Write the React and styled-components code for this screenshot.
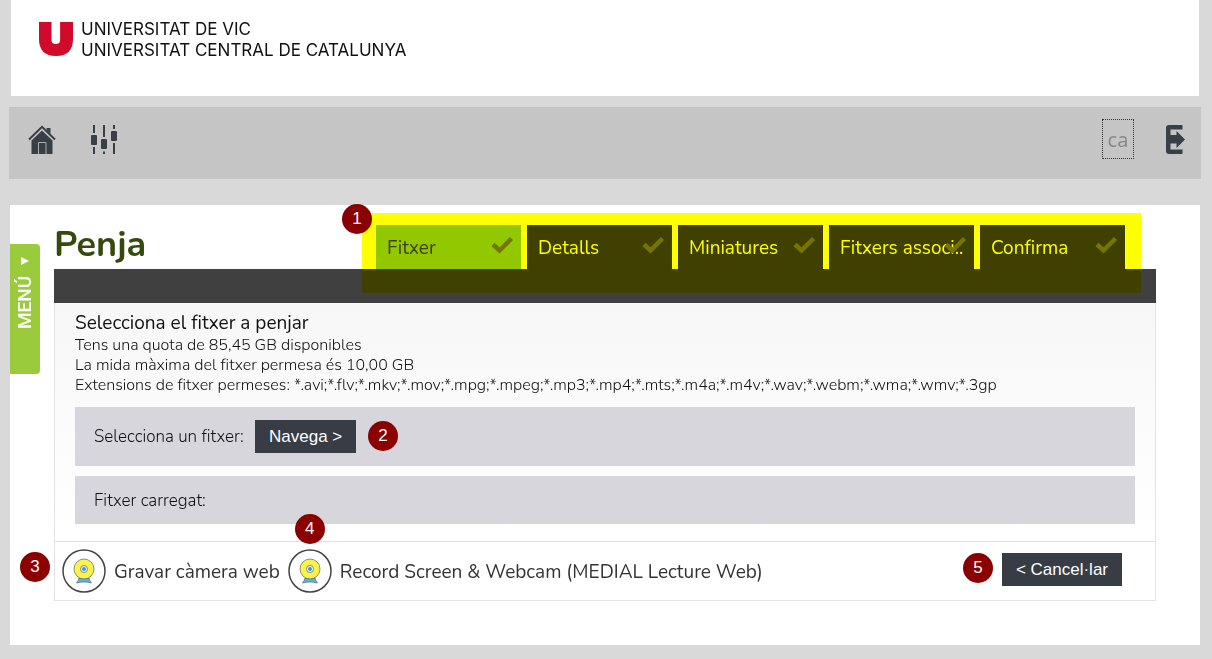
import React, { useState } from "react";
import styled, { createGlobalStyle } from "styled-components";

const GlobalStyle = createGlobalStyle`
  * {
    box-sizing: border-box;
  }
  body {
    margin: 0;
    background: #d9d9d9;
    color: #111;
    font-family: Nunito, "Noto Sans", sans-serif;
    font-weight: 400;
    font-variant-ligatures: none;
  }
  button {
    font-family: inherit;
    font-variant-ligatures: none;
    cursor: pointer;
  }
`;

const Page = styled.div`
  padding: 0 12px 14px 10px;
`;

const Header = styled.header`
  display: flex;
  gap: 8px;
  height: 96px;
  margin: 0 1px;
  padding: 19px 28px;
  background: #fff;
  .mark {
    width: 34px;
    height: 34px;
    margin-top: 3px;
  }
`;

const LogoText = styled.div`
  color: #111;
  font-family: Inter, sans-serif;
  font-size: 17px;
  line-height: 21px;
`;

const Toolbar = styled.nav`
  display: flex;
  align-items: center;
  justify-content: space-between;
  height: 72px;
  margin: 11px -1px 26px;
  padding: 0 16px 8px 19px;
  background: #c5c5c5;
`;

const ToolGroup = styled.div`
  display: flex;
  align-items: center;
  gap: ${(props) => props.gap}px;
`;

const IconLink = styled.a`
  display: flex;
  padding-top: 1px;
  color: #3a3f47;
`;

const LangButton = styled.button`
  width: 32px;
  height: 40px;
  padding: 0;
  border: 1px dotted #333;
  background: none;
  color: #8a8a8a;
  font-family: "Noto Sans", sans-serif;
  font-size: 20px;
`;

const Main = styled.main`
  display: flex;
  align-items: flex-start;
  gap: 14px;
  padding: 0 44px 44px 0;
  background: #fff;
`;

const MenuTab = styled.button`
  display: flex;
  align-items: center;
  justify-content: flex-end;
  gap: 11px;
  width: 30px;
  height: 130px;
  margin-top: 39px;
  padding: 0 0 13px;
  border: 0;
  border-radius: 4px 0 0 4px;
  background: #9acb3c;
  color: #fff;
  font-family: Roboto, sans-serif;
  font-size: 19px;
  font-weight: 500;
  line-height: 28px;
  writing-mode: vertical-rl;
  transform: rotate(180deg);
`;

const Content = styled.div`
  flex: 1;
  min-width: 0;
`;

const TitleRow = styled.div`
  display: flex;
  align-items: flex-end;
  justify-content: space-between;
  height: 64px;
  padding-right: 31px;
`;

const Title = styled.h1`
  margin: 0;
  color: #354a0d;
  font-size: 36px;
  font-weight: 700;
  line-height: 48px;
`;

const Tabs = styled.div`
  position: relative;
  display: flex;
  gap: 6px;
`;

const Tab = styled.button`
  position: relative;
  width: 145px;
  height: 44px;
  padding: 2px 11px 0;
  overflow: hidden;
  border: 0;
  background: ${(props) => (props.$active ? "#92c83e" : "#404040")};
  color: ${(props) => (props.$active ? "#404040" : "#fff")};
  font-size: 19px;
  text-align: left;
  white-space: nowrap;
  svg {
    position: absolute;
    top: 11px;
    right: 7px;
  }
`;

const Highlight = styled.div`
  position: absolute;
  top: -12px;
  right: -16px;
  bottom: -24px;
  left: -14px;
  background: #ff0;
  mix-blend-mode: multiply;
  pointer-events: none;
`;

const Badge = styled.span`
  position: absolute;
  top: ${(props) => props.$top}px;
  left: ${(props) => props.$left}px;
  width: 30px;
  height: 30px;
  border-radius: 50%;
  background: #8b0000;
  color: #fff;
  font-family: "Liberation Sans", Arial, sans-serif;
  font-size: 17px;
  line-height: 30px;
  text-align: center;
`;

const Bar = styled.div`
  height: 34px;
  background: #404040;
`;

const Panel = styled.section`
  padding: 10px 20px 17px;
  border: 1px solid #e3e3e3;
  border-top: 0;
  background: linear-gradient(#f7f7f7, #fff);
`;

const Intro = styled.div`
  padding-bottom: 2px;
`;

const PanelTitle = styled.h2`
  margin: 0 0 2px;
  font-size: 19px;
  font-weight: 400;
  line-height: 20px;
`;

const Info = styled.p`
  margin: 0;
  font-size: 16px;
  font-weight: 300;
  line-height: 20px;
`;

const Row = styled.div`
  display: flex;
  align-items: center;
  gap: 8px;
  height: ${(props) => props.$height}px;
  margin-top: 10px;
  padding: 0 19px;
  background: #d7d6dc;
  font-size: 17px;
  font-weight: 300;
`;

const RowLabel = styled.span`
  min-width: 153px;
`;

const Anchor = styled.div`
  position: relative;
  display: flex;
  font-weight: 400;
`;

const DarkButton = styled.button`
  height: 33px;
  padding: 0 14px;
  border: 0;
  background: #383d45;
  color: #fff;
  font-family: "Liberation Sans", Arial, sans-serif;
  font-size: 17px;
`;

const Footer = styled.footer`
  display: flex;
  align-items: flex-start;
  justify-content: space-between;
  height: 59px;
  padding: 7px 33px 0 7px;
  border: 1px solid #e3e3e3;
  border-top: 0;
`;

const Recorders = styled.div`
  display: flex;
  gap: 8px;
`;

const RecordLink = styled.a`
  position: relative;
  display: flex;
  align-items: center;
  gap: 8px;
  color: #333;
  font-size: 19px;
  text-decoration: none;
`;

const RecordLabel = styled.span`
  padding-top: 2px;
`;

const Actions = styled.div`
  padding-top: 4px;
`;

const HomeIcon = () => (
  <svg width="28" height="29" viewBox="0 0 28 29">
    <path d="M1 14.5 14 1.8 27 14.5" fill="none" stroke="currentColor" strokeWidth="2" />
    <path d="M18.500 3h4v6l-4-4z" fill="currentColor" />
    <path d="M14 5.500 24.500 15.500V29h-21V15.500z" fill="currentColor" />
    <path d="M10.500 29V17.500h7.500V29" fill="none" stroke="#aaacae" strokeWidth="1" />
  </svg>
);

const SlidersIcon = () => (
  <svg width="28" height="29" viewBox="0 0 28 29" fill="currentColor">
    <path d="M3 0h2v8H3zM3 22h2v7H3zM13 0h2v12h-2zM13 26.500h2V29h-2zM23 0h2v4h-2zM23 18h2v11h-2z" />
    <rect x="1" y="10" width="6" height="10" rx="1" />
    <rect x="11" y="14" width="6" height="10" rx="1" />
    <rect x="21" y="6" width="6" height="10" rx="1" />
  </svg>
);

const ExitIcon = () => (
  <svg width="19" height="29" viewBox="0 0 19 29" fill="currentColor">
    <path d="M3 0h13.500v4.500H4.500V10h6V6L19 14.500 10.500 23v-4.500h-6v6h12V29H3q-3 0-3-3V3q0-3 3-3z" />
  </svg>
);

const CheckIcon = () => (
  <svg width="23" height="18" viewBox="0 0 23 18">
    <path d="M2 8.500 8.500 14.500 20.500 2.500" fill="none" stroke="#757575" strokeWidth="4.500" />
  </svg>
);

const WebcamIcon = () => (
  <svg width="44" height="44" viewBox="0 0 44 44">
    <circle cx="22" cy="22" r="21" fill="#fff" stroke="#444" strokeWidth="1.500" />
    <path
      d="M17 29h10q.5 2.800 2.500 5-3.500-1-7.500-1t-7.500 1q2-2.200 2.500-5z"
      fill="#5ab4e8"
      stroke="#456"
      strokeWidth=".6"
    />
    <circle cx="22" cy="20" r="10" fill="#fbf24a" stroke="#665" strokeWidth=".7" />
    <circle cx="22" cy="20" r="3.500" fill="#fff" stroke="#556" strokeWidth=".7" />
    <circle cx="22" cy="20" r="2" fill="#2b9be0" />
  </svg>
);

const tabs = ["Fitxer", "Detalls", "Miniatures", "Fitxers associ..", "Confirma"];

function App() {
  const [active, setActive] = useState("Fitxer");

  return (
    <>
      <GlobalStyle />
      <Page>
        <Header>
          <svg className="mark" viewBox="0 0 34 34">
            <path
              d="M0 0h12.500v18q0 4 4.300 4t4.300-4V0H34v17q0 17-17 17T0 17z"
              fill="#d10a2c"
            />
          </svg>
          <LogoText>
            UNIVERSITAT DE VIC
            <br />
            UNIVERSITAT CENTRAL DE CATALUNYA
          </LogoText>
        </Header>
        <Toolbar>
          <ToolGroup gap={34}>
            <IconLink href="#home" aria-label="Inici">
              <HomeIcon />
            </IconLink>
            <IconLink href="#settings" aria-label="Configuració">
              <SlidersIcon />
            </IconLink>
          </ToolGroup>
          <ToolGroup gap={32}>
            <LangButton type="button">ca</LangButton>
            <IconLink href="#logout" aria-label="Surt">
              <ExitIcon />
            </IconLink>
          </ToolGroup>
        </Toolbar>
        <Main>
          <MenuTab type="button">
            MENÚ
            <svg width="8" height="8" viewBox="0 0 8 8">
              <path d="M8 0v8L0 4z" fill="#fff" />
            </svg>
          </MenuTab>
          <Content>
            <TitleRow>
              <Title>Penja</Title>
              <Tabs role="tablist">
                {tabs.map((name) => (
                  <Tab
                    key={name}
                    type="button"
                    role="tab"
                    aria-selected={name === active}
                    $active={name === active}
                    onClick={() => setActive(name)}
                  >
                    {name}
                    <CheckIcon />
                  </Tab>
                ))}
                <Highlight />
                <Badge $top={-21} $left={-34}>
                  1
                </Badge>
              </Tabs>
            </TitleRow>
            <Bar />
            <Panel>
              <Intro>
                <PanelTitle>Selecciona el fitxer a penjar</PanelTitle>
                <Info>Tens una quota de 85,45 GB disponibles</Info>
                <Info>La mida màxima del fitxer permesa és 10,00 GB</Info>
                <Info>
                  Extensions de fitxer permeses:
                  *.avi;*.flv;*.mkv;*.mov;*.mpg;*.mpeg;*.mp3;*.mp4;*.mts;*.m4a;*.m4v;*.wav;*.webm;*.wma;*.wmv;*.3gp
                </Info>
              </Intro>
              <Row $height={59}>
                <RowLabel id="pick-label">Selecciona un fitxer:</RowLabel>
                <Anchor>
                  <DarkButton type="button" aria-describedby="pick-label">
                    Navega &gt;
                  </DarkButton>
                  <Badge $top={1} $left={113}>
                    2
                  </Badge>
                </Anchor>
              </Row>
              <Row $height={48}>
                <RowLabel>Fitxer carregat:</RowLabel>
              </Row>
            </Panel>
            <Footer>
              <Recorders>
                <RecordLink href="#webcam">
                  <WebcamIcon />
                  <RecordLabel>Gravar càmera web</RecordLabel>
                  <Badge $top={3} $left={-42}>
                    3
                  </Badge>
                </RecordLink>
                <RecordLink href="#screen">
                  <WebcamIcon />
                  <RecordLabel>
                    Record Screen &amp; Webcam (MEDIAL Lecture Web)
                  </RecordLabel>
                  <Badge $top={-35} $left={7}>
                    4
                  </Badge>
                </RecordLink>
              </Recorders>
              <Actions>
                <Anchor>
                  <DarkButton type="button">&lt; Cancel·lar</DarkButton>
                  <Badge $top={0} $left={-39}>
                    5
                  </Badge>
                </Anchor>
              </Actions>
            </Footer>
          </Content>
        </Main>
      </Page>
    </>
  );
}

export default App;
